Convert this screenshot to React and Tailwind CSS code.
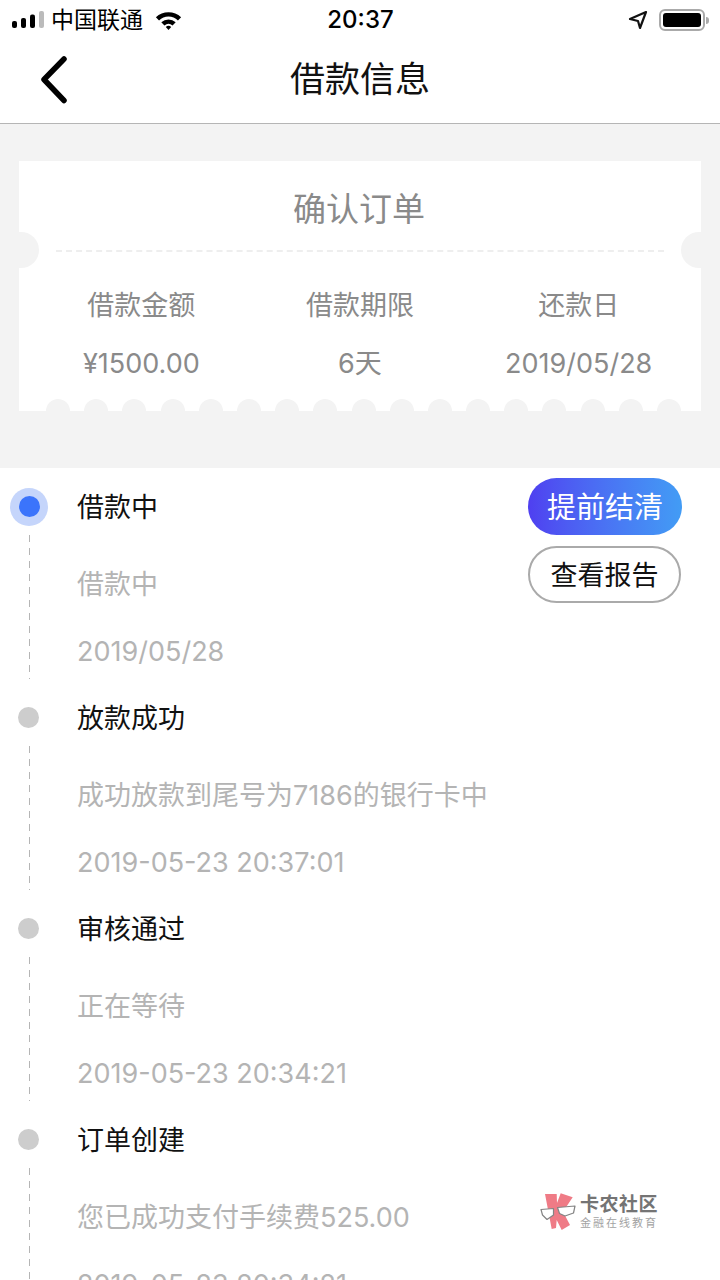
const cjk = { fontFamily: 'Inter, "Noto Sans CJK SC", sans-serif' };

const steps = [
  { title: "借款中", desc: "借款中", time: "2019/05/28", active: true },
  { title: "放款成功", desc: "成功放款到尾号为7186的银行卡中", time: "2019-05-23 20:37:01" },
  { title: "审核通过", desc: "正在等待", time: "2019-05-23 20:34:21" },
  { title: "订单创建", desc: "您已成功支付手续费525.00", time: "2019-05-23 20:34:21" },
];

const scallops = Array.from({ length: 17 });

function StatusBar() {
  return (
    <div className="h-10 flex items-center justify-between pl-3 pr-[11px] text-black">
      <div className="flex items-center w-[260px]">
        <svg width="32" height="18" viewBox="0 0 32 18" className="shrink-0">
          <rect x="0" y="10" width="5" height="7" rx="2" fill="#000" />
          <rect x="9" y="7" width="5" height="10" rx="2" fill="#000" />
          <rect x="18" y="3.5" width="5" height="13.5" rx="2" fill="#000" />
          <rect x="27" y="0" width="5" height="17" rx="2" fill="#bbb" />
        </svg>
        <span className="ml-[7px] text-[23px] leading-none">中国联通</span>
        <svg width="27" height="20" viewBox="0 0 30 22" className="ml-3 shrink-0">
          <path d="M1 8 A20 20 0 0 1 29 8 L25.5 11.5 A15 15 0 0 0 4.500 11.500 Z" fill="#000" />
          <path d="M7 13.500 A12 12 0 0 1 23 13.500 L19.500 17 A7 7 0 0 0 10.500 17 Z" fill="#000" />
          <path d="M12 18.800 A4.500 4.500 0 0 1 18 18.800 L15 22 Z" fill="#000" />
        </svg>
      </div>
      <span className="text-[24px] leading-none font-medium">20:37</span>
      <div className="flex items-center justify-end w-[260px]">
        <svg width="20" height="20" viewBox="0 0 20 20" className="shrink-0">
          <path d="M18 2 L2 9 L10 11 L12 18 Z" fill="none" stroke="#111" strokeWidth="2.200" strokeLinejoin="round" />
        </svg>
        <div className="ml-[11px] w-[46px] h-[22px] rounded-[6px] border-2 border-[#aaa] p-[2px]">
          <div className="w-full h-full bg-black rounded-[3px]" />
        </div>
        <div className="ml-[1px] w-[3px] h-[7px] bg-[#aaa] rounded-r-sm" />
      </div>
    </div>
  );
}

function Step({ step }) {
  return (
    <div className="flex h-[211px]">
      <div className="w-[58px] shrink-0 flex flex-col items-center relative">
        {step.active ? (
          <div className="mt-5 w-[38px] h-[38px] rounded-full bg-[#c5d5fb] flex items-center justify-center">
            <div className="w-[21px] h-[21px] rounded-full bg-[#3b74fb]" />
          </div>
        ) : (
          <div className="mt-[28px] mr-[2px] w-[21px] h-[21px] rounded-full bg-[#cdcdcd]" />
        )}
        <div
          className={`w-px h-[145px] bg-[repeating-linear-gradient(to_bottom,#b5b5b5_0,#b5b5b5_7px,transparent_7px,transparent_13px)] ${
            step.active ? "mt-[9px]" : "mt-[18px]"
          }`}
        />
      </div>
      <div className="ml-[19px] flex-1 flex flex-col">
        <div className="mt-[20px] h-[38px] flex items-center text-[27px] leading-none text-[#111]">{step.title}</div>
        <div className="mt-[39px] h-[38px] flex items-center text-[27px] leading-none text-[#b4b4b4]">{step.desc}</div>
        <div className="mt-[29px] h-[38px] flex items-center text-[27px] leading-none text-[#b4b4b4]">{step.time}</div>
      </div>
      {step.active && (
        <div className="mr-[38px] pt-[10px] flex flex-col gap-[11px]">
          <button className="w-[154px] h-[57px] pt-[2px] rounded-full bg-gradient-to-r from-[#4f3ff0] to-[#429cf5] text-white text-[29px] leading-none">
            提前结清
          </button>
          <button className="w-[153px] h-[57px] pt-[1px] rounded-full border-2 border-[#aaa] bg-white text-[#111] text-[27px] leading-none">
            查看报告
          </button>
        </div>
      )}
    </div>
  );
}

export default function App() {
  return (
    <div className="relative w-[720px] h-[1280px] overflow-hidden bg-white" style={cjk}>
      <StatusBar />

      {/* Nav */}
      <div className="h-[84px] border-b border-[#b5b5b5] flex items-center relative">
        <svg width="30" height="48" viewBox="0 0 30 48" className="ml-[39px] mb-[3px]">
          <path d="M25 3 L5 23.500 L25 44.500" fill="none" stroke="#000" strokeWidth="5.500" strokeLinecap="round" strokeLinejoin="round" />
        </svg>
        <div className="absolute inset-0 flex items-center justify-center pb-[4px] text-[35px] leading-none text-[#111]">借款信息</div>
      </div>

      {/* Order ticket */}
      <div className="h-[344px] bg-[#f3f3f3] px-[19px] pt-[37px]">
        <div className="relative h-[250px] bg-white overflow-hidden">
          <div className="h-[89px] flex items-center justify-center pt-[8px] pr-[2px] text-[33px] leading-none text-[#8a8a8a]">确认订单</div>
          <div className="mx-[37px] border-t-2 border-dashed border-[#eeeeee]" />
          <div className="absolute left-[-16px] top-[71px] w-9 h-9 rounded-full bg-[#f3f3f3]" />
          <div className="absolute right-[-16px] top-[71px] w-9 h-9 rounded-full bg-[#f3f3f3]" />
          <div className="grid grid-cols-3 pt-[34px] text-[#8a8a8a] px-[13px]">
            {[
              ["借款金额", "¥1500.00"],
              ["借款期限", "6天"],
              ["还款日", "2019/05/28"],
            ].map(([label, value]) => (
              <div key={label} className="flex flex-col items-center">
                <div className="h-[38px] flex items-center text-[27px] leading-none">{label}</div>
                <div className="mt-[20px] h-[38px] flex items-center text-[27px] leading-none">{value}</div>
              </div>
            ))}
          </div>
          <div className="absolute left-[27px] right-[20px] bottom-[-12px] flex justify-between">
            {scallops.map((_, i) => (
              <div key={i} className="w-6 h-6 rounded-full bg-[#f3f3f3]" />
            ))}
          </div>
        </div>
      </div>

      {/* Timeline */}
      <div>
        {steps.map((s) => (
          <Step key={s.title} step={s} />
        ))}
      </div>

      {/* Watermark */}
      <div className="absolute left-[540px] top-[1192px] flex items-start opacity-90">
        <svg width="36" height="38" viewBox="0 0 36 38" className="shrink-0">
          <path d="M5 2 L16.700 2 L17 11 L20.700 1.300 L32.700 5.300 L23 19.700 L30 33 L21.700 38 L16.700 28 L16 36 L11.700 37 Z" fill="#ee6d7a" />
          <path d="M1 17.500 L13.500 16.500 L13.500 23 L7 27.500 L2.500 23 Z" fill="#fff" stroke="#777" strokeWidth="1.200" strokeLinejoin="round" />
          <path d="M17.500 15.500 L35 14 L33.500 21 L25 24 L19.500 21.500 Z" fill="#fff" stroke="#777" strokeWidth="1.200" strokeLinejoin="round" />
        </svg>
        <div className="ml-[4px] mt-[2px] flex flex-col">
          <span className="text-[19px] leading-[22px] font-bold text-[#666] tracking-[0.5px]">卡农社区</span>
          <span className="text-[11px] leading-[14px] tracking-[2px] text-[#999]">金融在线教育</span>
        </div>
      </div>
    </div>
  );
}
